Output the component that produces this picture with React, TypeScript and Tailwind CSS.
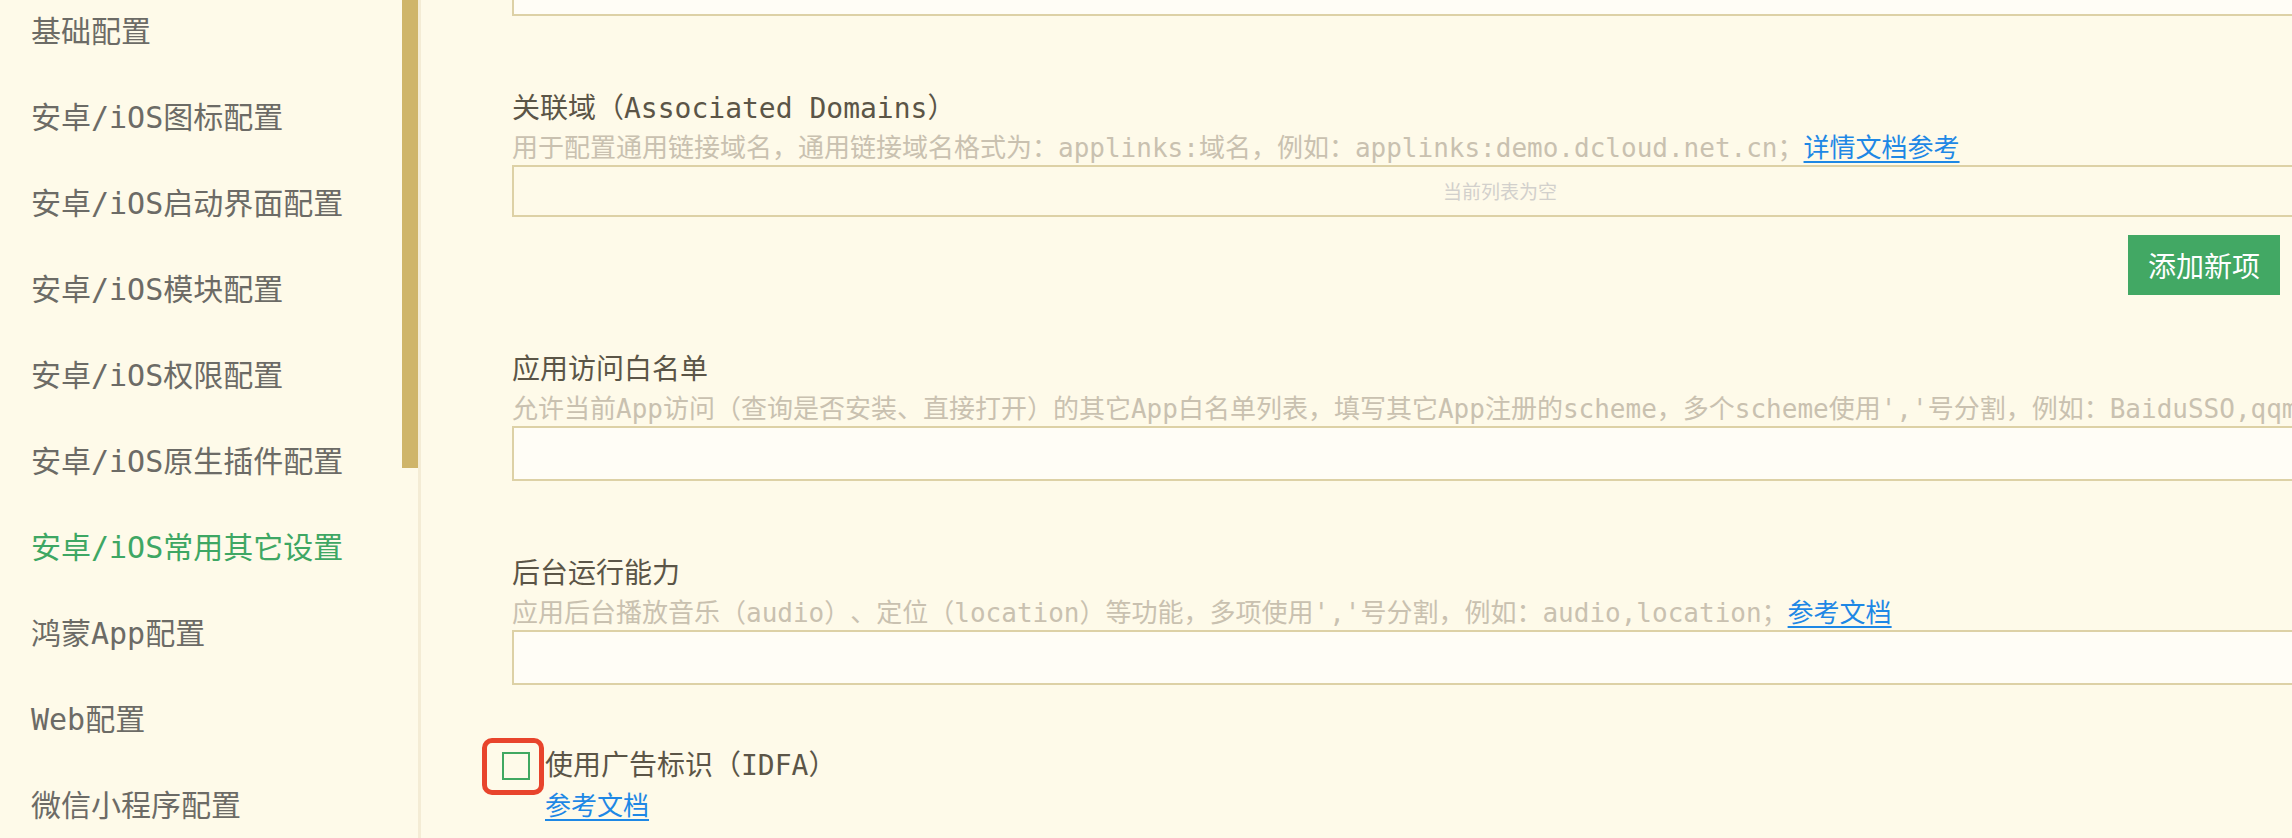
const menu = [
  "基础配置",
  "安卓/iOS图标配置",
  "安卓/iOS启动界面配置",
  "安卓/iOS模块配置",
  "安卓/iOS权限配置",
  "安卓/iOS原生插件配置",
  "安卓/iOS常用其它设置",
  "鸿蒙App配置",
  "Web配置",
  "微信小程序配置",
];

const active = "安卓/iOS常用其它设置";

function Sidebar() {
  return (
    <aside className="flex w-[421px] shrink-0 border-r-[3px] border-[#f4ecd5]">
      <ul className="mt-[-12px] flex-1 pl-[31px]">
        {menu.map((m) => (
          <li
            key={m}
            className={`flex h-[86px] items-center text-[30px] whitespace-nowrap ${m === active ? "text-[#3ea764]" : "text-[#6c6b66]"}`}
          >
            {m}
          </li>
        ))}
      </ul>
      <div className="w-[16px]">
        <div className="h-[468px] bg-[#cfb56a]" />
      </div>
    </aside>
  );
}

function Field({ title, desc, link, children }: { title: string; desc: string; link?: string; children: React.ReactNode }) {
  return (
    <section>
      <h3 className="h-[36px] overflow-visible text-[28px] leading-[36px] text-[#5b5547] whitespace-nowrap">{title}</h3>
      <p className="h-[38px] overflow-visible text-[26px] leading-[38px] text-[#c9c1b0] whitespace-nowrap">
        {desc}
        {link && (
          <a href="#" className="font-['Noto_Sans_CJK_SC',sans-serif] leading-[38px] text-[#1e88e5] underline underline-offset-[4px]">
            {link}
          </a>
        )}
      </p>
      {children}
    </section>
  );
}

export default function App() {
  return (
    <div className="flex h-[838px] w-full overflow-hidden bg-[#fefae9] font-['DejaVu_Sans_Mono','Noto_Sans_CJK_SC',monospace] [text-spacing-trim:space-all]">
      <Sidebar />
      <main className="min-w-0 flex-1 overflow-hidden pl-[91px] pr-[12px]">
        <div className="mt-[-38px] h-[54px] w-[1976px] border-2 border-[#ddd1a6] bg-[#fffdf6]" />

        <div className="mt-[75px]">
          <Field
            title="关联域（Associated Domains）"
            desc="用于配置通用链接域名，通用链接域名格式为：applinks:域名，例如：applinks:demo.dcloud.net.cn；"
            link="详情文档参考"
          >
            <div className="flex h-[52px] w-[1976px] items-center justify-center border-2 border-[#ddd1a6] font-['Noto_Sans_CJK_SC',sans-serif] text-[19px] text-[#d2d0cc]">
              当前列表为空
            </div>
          </Field>
          <div className="mt-[18px] flex justify-end">
            <button className="h-[60px] w-[152px] bg-[#42a864] font-['Noto_Sans_CJK_SC',sans-serif] text-[28px] text-white">
              添加新项
            </button>
          </div>
        </div>

        <div className="mt-[57px]">
          <Field
            title="应用访问白名单"
            desc="允许当前App访问（查询是否安装、直接打开）的其它App白名单列表，填写其它App注册的scheme，多个scheme使用','号分割，例如：BaiduSSO,qqmusic；"
            link="参考文档"
          >
            <input className="block h-[55px] w-[1976px] border-2 border-[#ddd1a6] bg-[#fffdf6] outline-none" />
          </Field>
        </div>

        <div className="mt-[75px]">
          <Field
            title="后台运行能力"
            desc="应用后台播放音乐（audio）、定位（location）等功能，多项使用','号分割，例如：audio,location；"
            link="参考文档"
          >
            <input className="block h-[55px] w-[1976px] border-2 border-[#ddd1a6] bg-[#fffdf6] outline-none" />
          </Field>
        </div>

        <div className="mt-[63px] ml-[-10px] flex items-start gap-[15px]">
          <div className="relative mt-[4px] h-[28px] w-[28px] shrink-0">
            <div className="h-full w-full border-2 border-[#40a861]" />
            <div className="pointer-events-none absolute top-[-14px] right-[-14px] bottom-[-15px] left-[-20px] rounded-[10px] border-[5px] border-[#e8442c]" />
          </div>
          <div>
            <div className="h-[36px] text-[28px] leading-[36px] text-[#5b5547] whitespace-nowrap">使用广告标识（IDFA）</div>
            <div className="mt-[3px] h-[34px] leading-[34px]">
              <a href="#" className="font-['Noto_Sans_CJK_SC',sans-serif] text-[26px] leading-[34px] text-[#1e88e5] underline underline-offset-[4px]">
                参考文档
              </a>
            </div>
          </div>
        </div>
      </main>
    </div>
  );
}
